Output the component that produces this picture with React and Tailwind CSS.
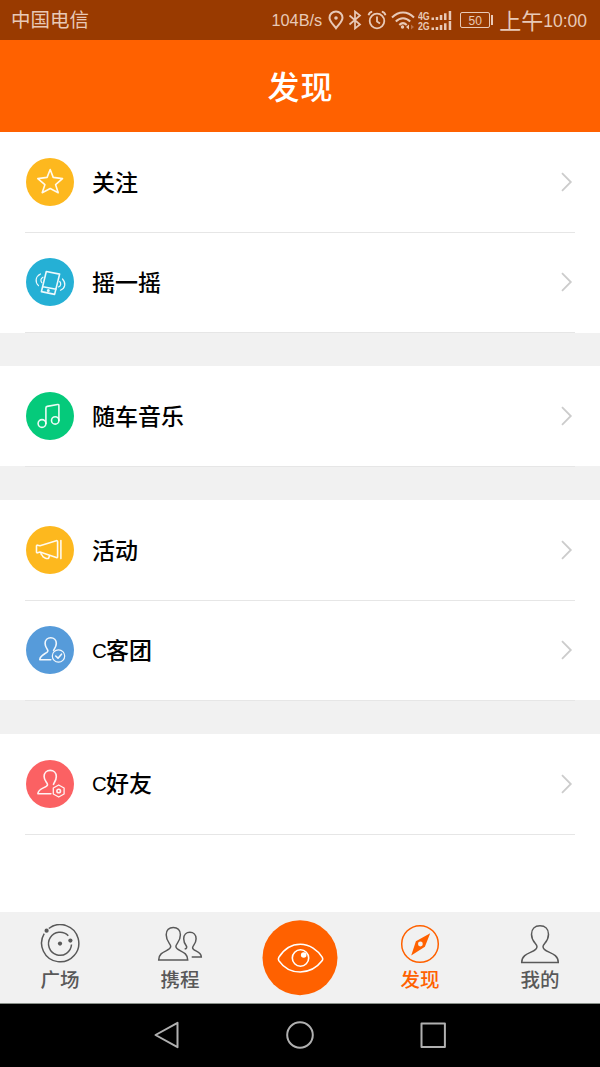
// ═════════════════════════════════════════════════════════════════════════
//   <App />
//
//   Discover screen: status bar, title, grouped menu, tab bar, system keys.
// ═════════════════════════════════════════════════════════════════════════

const groups = [
  [
    { label: '关注', color: 'bg-[#fdb81e]', Icon: StarIcon },
    { label: '摇一摇', color: 'bg-[#25b0d5]', Icon: ShakeIcon },
  ],
  [{ label: '随车音乐', color: 'bg-[#05ca7b]', Icon: MusicIcon }],
  [
    { label: '活动', color: 'bg-[#fdb81e]', Icon: MegaphoneIcon },
    { latin: 'C', label: '客团', color: 'bg-[#569bda]', Icon: UserCheckIcon },
  ],
  [{ latin: 'C', label: '好友', color: 'bg-[#fb6163]', Icon: UserHexIcon }],
];

export default function App() {
  return (
    <div className="flex flex-col w-[600px] h-[1067px] overflow-hidden bg-white font-['Liberation_Sans','Noto_Sans_CJK_SC',sans-serif]">
      <StatusBar />

      <header className="h-[92px] shrink-0 bg-[#ff6100] text-white flex items-center justify-center pt-[3px] pl-px">
        <h1 className="text-[32px] leading-none font-medium tracking-[1px]">发现</h1>
      </header>

      {/* ─── Menu groups ─── */}
      <main className="flex-1 flex flex-col gap-[33.5px] bg-white">
        {groups.map((rows, i) => (
          <section key={i} className="relative">
            {rows.map((row) => (
              <MenuRow key={row.label} {...row} />
            ))}
            {i < groups.length - 1 && <div className="h-[33.5px] -mb-[33.5px] bg-[#f1f1f1]" />}
          </section>
        ))}
      </main>

      <TabBar />
      <SystemKeys />
    </div>
  );
}

function MenuRow({ latin, label, color, Icon }) {
  return (
    <button type="button" className="w-full h-[100.3px] pl-[26px] pr-[26px] flex items-center relative text-left">
      <span className={`w-12 h-12 rounded-full shrink-0 ${color}`}>
        <svg
          viewBox="0 0 48 48"
          fill="none"
          stroke="#ffffff"
          strokeOpacity="0.92"
          strokeWidth="1.6"
          strokeLinecap="round"
          strokeLinejoin="round"
          className="w-12 h-12"
        >
          <Icon />
        </svg>
      </span>
      <span className="ml-[18px] pt-[2px] flex-1 flex items-baseline text-[23px] font-medium text-black leading-none">
        {latin && <span className="w-[14px] pb-px -translate-y-px text-[20.5px] font-normal">{latin}</span>}
        {label}
      </span>
      <svg viewBox="0 0 14 22" fill="none" className="w-[14px] h-[22px]">
        <path d="M2 2.200L10.800 11 2 19.800" stroke="#cccccc" strokeWidth="1.8" />
      </svg>
      <span className="absolute left-[25px] right-[25px] -bottom-[0.5px] h-px bg-[#e6e6e6]" />
    </button>
  );
}

// ─── Status bar ───────────────────────────────────────────────────────────
function StatusBar() {
  return (
    <div className="h-10 shrink-0 bg-[#993a00] text-[#e8c9b7] flex items-center pl-[11px] pr-[13px]">
      <span className="pt-[2px] text-[19.5px] leading-none">中国电信</span>
      <div className="ml-auto flex items-center">
        <span className="pt-px text-[16.3px] leading-none">104B/s</span>
        <svg viewBox="0 0 16 20" fill="none" stroke="currentColor" strokeWidth="2" className="w-4 h-5 ml-[6px]">
          <path d="M8 18.200C5.500 14.600 1.500 11.500 1.500 7.700a6.500 6.300 0 0 1 13 0C14.500 11.500 10.500 14.600 8 18.200Z" />
          <circle cx="8" cy="8" r="1.800" fill="currentColor" stroke="none" />
        </svg>
        <svg viewBox="0 0 14 20" fill="none" stroke="currentColor" strokeWidth="1.7" className="w-[14px] h-5 ml-1">
          <path d="M1.500 5.500l10.500 9L7 18.500V1.500l5 4-10.500 9" />
        </svg>
        <svg viewBox="0 0 20 20" fill="none" stroke="currentColor" strokeWidth="1.8" className="w-5 h-5 ml-[5px]">
          <circle cx="10" cy="11" r="7.300" />
          <path d="M10 6.500v5l3 2" />
          <path d="M1.500 5.200C2 3.500 3.500 2 5.200 1.700M18.500 5.200C18 3.500 16.500 2 14.800 1.700" />
        </svg>
        <svg viewBox="0 0 24 20" fill="none" stroke="currentColor" strokeWidth="2" className="w-6 h-5 ml-1">
          <path d="M1 7.500c6.500-6.700 15.500-6.700 22 0M4.800 11.500c4.400-4.500 10-4.500 14.400 0M8.300 15c2.300-2.300 5.100-2.300 7.400 0" />
          <circle cx="11.500" cy="17" r="1.700" fill="currentColor" stroke="none" />
          <path d="M18 14.500v5l-3-2.500z" fill="currentColor" stroke="none" />
          <path d="M20 14.500v5l3-2.500z" fill="currentColor" fillOpacity="0.4" stroke="none" />
        </svg>
        <div className="ml-[3px] flex flex-col gap-px">
          <SignalRow name="4G" />
          <SignalRow name="2G" />
        </div>
        <div className="ml-[8px] w-[30px] h-4 rounded-[2px] border border-current flex items-center justify-center pt-px text-[12px] leading-none">
          50
        </div>
        <span className="ml-px w-[2px] h-[10px] bg-current" />
        <span className="ml-[6px] pt-[4px] text-[22px] leading-none">上午</span>
        <span className="pt-[3px] text-[17.500px] leading-none">10:00</span>
      </div>
    </div>
  );
}

function SignalRow({ name }) {
  return (
    <div className="flex items-end h-[9px]">
      <span className="w-[13px] h-[9px]">
        <span className="block w-[14px] origin-left scale-x-[0.8] text-[11px] leading-[10px] font-bold tracking-[-0.3px]">
          {name}
        </span>
      </span>
      <svg viewBox="0 0 21 9" fill="currentColor" className="w-[21px] h-[9px]">
        <path d="M.5 6.500h2.500V9H.5zM4.700 6h2.500v3H4.700zM8.800 4h2.500v5H8.800zM13 2.300h2.500V9H13zM17.700 0h2.500v9h-2.500z" />
      </svg>
    </div>
  );
}

// ─── Menu icons, drawn on a 48 × 48 disc ──────────────────────────────────
function StarIcon() {
  return <path d="M24.200 11.500l3 7.900 9.300 1.200-6.900 6.100 2.600 8-8-4.200-8 4.200 2.700-8-7.100-6.100 9.300-1.200z" />;
}

function ShakeIcon() {
  return (
    <>
      <path d="M20.300 13.500l13.300 2.600-5 20.300-13.200-2.800zM17 28.800l13.100 2.500" />
      <circle cx="22.300" cy="32.600" r="0.700" />
      <g strokeWidth="1.2">
        <path d="M14.500 16c-5 2.500-5.800 7.800-2 11.700M17 19.200c-2.400 1.200-2.700 3.600-1.200 5.500" />
        <path d="M36.500 21c3.700 4 2.900 9-2 11.200M33.700 23.500c1.700 2 1.300 4.500-1.300 5.500" />
      </g>
    </>
  );
}

function MusicIcon() {
  return (
    <>
      <circle cx="16" cy="31.500" r="3.900" />
      <circle cx="29.200" cy="28.400" r="3.700" />
      <path d="M19.900 31.500V16q0-1.300 1.300-1.600l10.400-1.900q1.300-.2 1.300 1v14.900" />
    </>
  );
}

function MegaphoneIcon() {
  return (
    <>
      <path d="M10.500 20q0-1 1-.8l2.500.5 16.300-5q1.300-.3 1.300 1v15q0 1.300-1.300.8L14 26l-2.500.8q-1 .2-1-.8zM34.900 14.600v18" />
      <path d="M14.900 27c.1 1.300.3 2 1.300 2.300.2 2.300 5.300 4 6.500 2.800l.8-2.300" />
    </>
  );
}

function UserCheckIcon() {
  return (
    <>
      <path d="M27.600 24.500c0-1.300 2.700-3 2.700-7 0-3.500-2.500-5.700-5.600-5.700s-5.600 2.200-5.600 5.700c0 4.200 2.800 5.500 2.800 7.500 0 2.200-8.100 3.600-8.100 8.700h11" />
      <circle cx="32.500" cy="30" r="6.200" strokeWidth="1.200" />
      <path d="M29.700 30l2.300 2.200 3.500-4" />
    </>
  );
}

function UserHexIcon() {
  return (
    <>
      <path d="M27.500 24.500c0-1.700 2.800-3.300 2.800-8 0-3.800-2.700-6.100-6.100-6.100s-6.100 2.300-6.100 6.100c0 4.700 3.400 5.700 3.400 8.200 0 3-9.600 3.200-9.600 9h13" />
      <path d="M32.700 25l5.400 3v6l-5.400 3-5.400-3v-6z" strokeWidth="1.300" />
      <circle cx="32.700" cy="31" r="1.800" />
    </>
  );
}

// ─── Bottom tabs ──────────────────────────────────────────────────────────
function TabBar() {
  return (
    <nav className="h-[92px] shrink-0 bg-[#f1f1f1] border-b border-[#899089] grid grid-cols-5 text-[#595959]">
      <Tab label="广场">
        <path d="M12.800 4.500A18.600 18.600 0 1 1 8.200 9.700" />
        <path d="M32.300 11.800A11.500 11.500 0 1 0 35.500 20.500" />
        <g fill="currentColor" stroke="none">
          <circle cx="24" cy="19.600" r="2.100" />
          <circle cx="10.600" cy="6.700" r="2.100" />
          <circle cx="34.400" cy="16.600" r="2.100" />
        </g>
      </Tab>
      <Tab label="携程">
        <path d="M2.700 36c0-10 12-8.200 12-13.700 0-2.600-4.500-4.300-4.500-11.500 0-4.700 3-7.300 7.100-7.300s7.100 2.600 7.100 7.300c0 7.200-4.500 8.900-4.500 11.500 0 5.500 11.800 3.700 11.800 13.700z" />
        <path d="M28.700 25c2.200-.4 2.400-2 1.500-3.300-1.300-1.700-2.500-3.700-2.500-7 0-4 2.700-6.400 6.200-6.400s6.200 2.400 6.200 6.400c0 5.300-3.500 6.800-3.500 9 0 3.600 8.700 2.800 8.700 9.300h-9.600" />
      </Tab>
      <div className="flex justify-center pt-2">
        <span className="w-[76px] h-[76px]">
          <svg viewBox="0 0 76 76" fill="none" stroke="#ffffff" strokeWidth="1.600" className="w-[76px] h-[76px]">
            <circle cx="38" cy="37.700" r="37.500" fill="#ff6100" stroke="none" />
            <path d="M16.800 37.400C21.500 30 29 24.300 38.300 24.300S55.800 30 60.300 37.400q.9 1.600 0 3.200C55 47.500 47.500 52 38.300 52S21.500 47.500 16.800 40.600q-.9-1.600 0-3.200z" />
            <circle cx="38.500" cy="38" r="8.200" />
            <circle cx="41.700" cy="35" r="2.800" fill="#ffffff" stroke="none" />
          </svg>
        </span>
      </div>
      <Tab label="发现" active>
        <circle cx="24" cy="20" r="18.300" />
        <path
          d="M34.200 9.200l-5.300 13.500L15.200 31.400l4.700-14.200zM24.400 17.600a2.400 2.400 0 1 0 0 4.800 2.400 2.400 0 1 0 0-4.800z"
          fill="currentColor"
          fillRule="evenodd"
          stroke="none"
        />
      </Tab>
      <Tab label="我的">
        <path d="M5.700 38.500c0-11 15.300-9.500 15.300-15.800 0-3.100-5.500-4.800-5.500-12.500 0-5.300 3.400-8.500 8.500-8.500s8.500 3.200 8.500 8.500c0 7.700-5.500 9.400-5.500 12.500 0 6.300 15.300 4.800 15.300 15.800z" />
      </Tab>
    </nav>
  );
}

function Tab({ label, active, children }) {
  return (
    <button type="button" className={`flex flex-col items-center pt-3 ${active ? 'text-[#ff6100]' : ''}`}>
      <svg viewBox="0 0 48 40" fill="none" stroke="currentColor" strokeWidth="1.5" className="w-12 h-10 shrink-0">
        {children}
      </svg>
      <span className="mt-[6px] text-[19.500px] leading-[20px] font-medium">{label}</span>
    </button>
  );
}

// ─── Android navigation keys ──────────────────────────────────────────────
function SystemKeys() {
  return (
    <div className="h-[63px] shrink-0 bg-black flex items-center justify-center gap-[105px] pb-px">
      {['M2.500 14L24.500 1.800v24.400z', 'M14 1.200a12.800 12.800 0 1 0 0 25.600 12.800 12.800 0 1 0 0-25.600z', 'M2.500 2.500h23.400v23.400H2.500z'].map((d) => (
        <svg
          key={d}
          viewBox="0 0 28 28"
          fill="none"
          stroke="#b0b0b0"
          strokeWidth="2"
          strokeLinejoin="round"
          className="w-7 h-7"
        >
          <path d={d} />
        </svg>
      ))}
    </div>
  );
}
